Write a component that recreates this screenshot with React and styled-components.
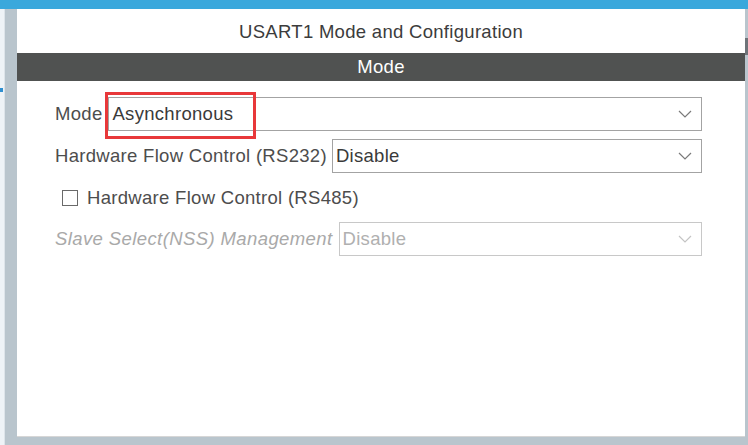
import React from "react"
import styled, { createGlobalStyle } from "styled-components"

const GlobalStyle = createGlobalStyle`
  html, body {
    margin: 0;
    padding: 0;
    background: #b9c5cd;
  }
  body {
    font-family: "Liberation Sans", Arial, sans-serif;
  }
`

const Chevron = ({ disabled }) => (
  <svg width="14" height="8" viewBox="0 0 14 8">
    <path
      d="M1 1 L7 7 L13 1"
      fill="none"
      stroke={disabled ? "#c4c4c4" : "#7a7a7a"}
      strokeWidth="1.2"
    />
  </svg>
)

const Dropdown = ({ value, disabled, highlighted }) => (
  <Select disabled={disabled}>
    <SelectValue disabled={disabled}>{value}</SelectValue>
    <Chevron disabled={disabled} />
    {highlighted && <Highlight />}
  </Select>
)

const App = () => (
  <>
    <GlobalStyle />
    <Screen>
      <TopBar />
      <Body>
        <EdgeStrip>
          <EdgeMark />
        </EdgeStrip>
        <Gutter />
        <Panel>
          <Title>USART1 Mode and Configuration</Title>
          <SectionBar>Mode</SectionBar>
          <Form>
            <Row gap={6}>
              <Label>Mode</Label>
              <Dropdown value="Asynchronous" highlighted />
            </Row>
            <Row>
              <Label>Hardware Flow Control (RS232)</Label>
              <Dropdown value="Disable" />
            </Row>
            <CheckRow>
              <CheckBox />
              <Label>Hardware Flow Control (RS485)</Label>
            </CheckRow>
            <Row gap={6}>
              <Label disabled>Slave Select(NSS) Management</Label>
              <Dropdown value="Disable" disabled />
            </Row>
          </Form>
        </Panel>
        <ScrollEdge>
          <Thumb />
        </ScrollEdge>
      </Body>
    </Screen>
  </>
)

export default App

const Screen = styled.div`
  width: 748px;
  height: 445px;
  display: flex;
  flex-direction: column;
  background: #b9c5cd;
  overflow: hidden;
`

const TopBar = styled.div`
  height: 9px;
  background: #3aa8dc;
  flex-shrink: 0;
`

const Body = styled.div`
  flex: 1;
  display: flex;
  padding-bottom: 8px;
`

const EdgeStrip = styled.div`
  width: 4px;
  background: #eef3f7;
  border-right: 1px solid #dde4ea;
  position: relative;
  margin-bottom: -8px;
`

const EdgeMark = styled.div`
  position: absolute;
  top: 79px;
  left: 0;
  width: 3px;
  height: 4px;
  background: #2f8fd0;
`

const Gutter = styled.div`
  width: 12px;
`

const Panel = styled.div`
  flex: 1;
  background: #ffffff;
  border-bottom: 1px solid #d6d6d6;
  display: flex;
  flex-direction: column;
`

const Title = styled.div`
  height: 44px;
  display: flex;
  align-items: center;
  justify-content: center;
  font-size: 18.5px;
  letter-spacing: 0.3px;
  color: #3c3c3c;
  padding-top: 2px;
  box-sizing: border-box;
`

const SectionBar = styled.div`
  height: 28px;
  background: #505251;
  color: #ffffff;
  font-size: 18.5px;
  letter-spacing: 0.3px;
  display: flex;
  align-items: center;
  justify-content: center;
`

const Form = styled.div`
  display: flex;
  flex-direction: column;
  gap: 8px;
  padding: 16px 43px 0 38px;
`

const Row = styled.div`
  display: flex;
  align-items: center;
  gap: ${p => p.gap || 5}px;
`

const CheckRow = styled.div`
  display: flex;
  align-items: center;
  gap: 9px;
  height: 33px;
  padding-left: 7px;
`

const Label = styled.span`
  font-size: 18.5px;
  letter-spacing: ${p => (p.disabled ? 0.4 : 0.3)}px;
  white-space: nowrap;
  color: ${p => (p.disabled ? "#a9a9a9" : "#4d4d4d")};
  font-style: ${p => (p.disabled ? "italic" : "normal")};
`

const Select = styled.div`
  position: relative;
  flex: 1;
  height: 34px;
  box-sizing: border-box;
  border: 1px solid ${p => (p.disabled ? "#c8c8c8" : "#a3a3a3")};
  background: #ffffff;
  display: flex;
  align-items: center;
  justify-content: space-between;
  padding: 0 9px 0 3px;
`

const SelectValue = styled.span`
  font-size: 18.5px;
  letter-spacing: 0.3px;
  color: ${p => (p.disabled ? "#b0b0b0" : "#3a3a3a")};
`

const CheckBox = styled.div`
  width: 16px;
  height: 16px;
  box-sizing: border-box;
  border: 1.5px solid #6a6a6a;
  background: #ffffff;
`

const Highlight = styled.div`
  position: absolute;
  left: -4px;
  top: -6px;
  width: 151px;
  height: 47px;
  box-sizing: border-box;
  border: 3px solid #e8383a;
  pointer-events: none;
`

const ScrollEdge = styled.div`
  width: 3px;
  position: relative;
`

const Thumb = styled.div`
  position: absolute;
  top: 29px;
  left: 0;
  width: 3px;
  height: 17px;
  background: #6e7479;
`
